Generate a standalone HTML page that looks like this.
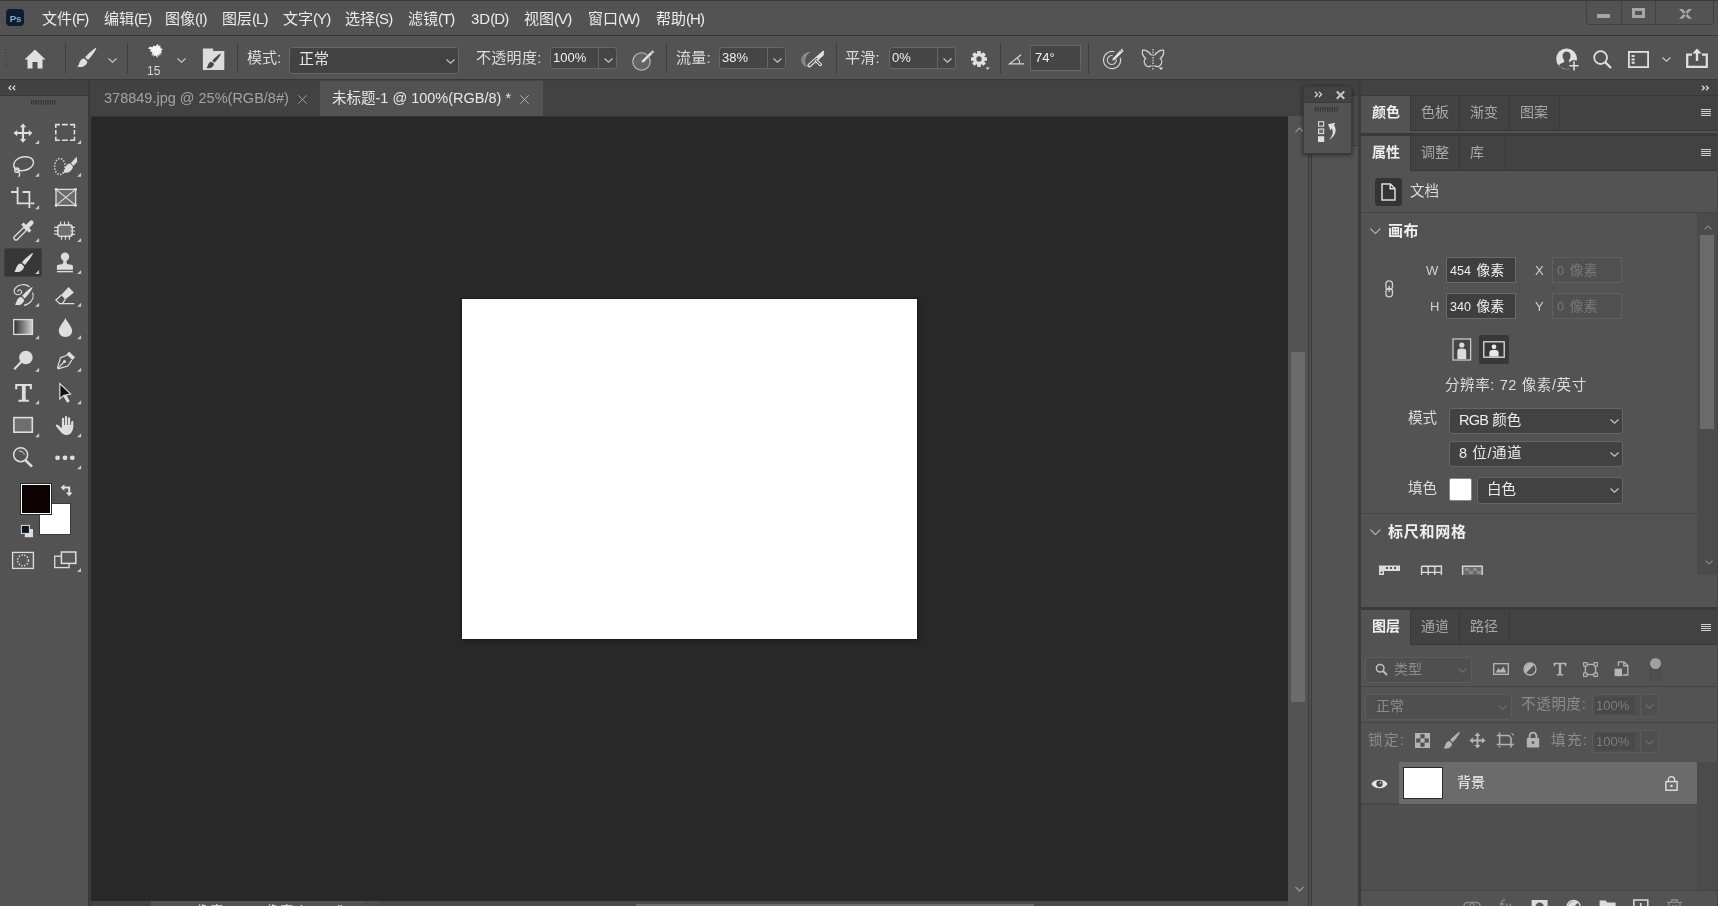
<!DOCTYPE html>
<html lang="zh-CN">
<head>
<meta charset="utf-8">
<title>Photoshop</title>
<style>
*{box-sizing:border-box;margin:0;padding:0}
html,body{width:1718px;height:906px;overflow:hidden;background:#535353}
body{position:relative;font-family:"Liberation Sans","Noto Sans CJK SC",sans-serif;color:#dcdcdc;font-size:14px;-webkit-font-smoothing:antialiased}
.abs{position:absolute}
.t{position:absolute;white-space:nowrap;line-height:1}
svg{position:absolute;overflow:visible}
/* ---- menubar ---- */
#menubar{left:0;top:0;width:1718px;height:36px;background:#535353;border-top:1px solid #3c3c3c;border-bottom:1px solid #3a3a3a}
#menubar .t{top:10px;font-size:15px;color:#ececec}
#menubar .t i{font-style:normal;letter-spacing:-0.9px}
/* ---- options bar ---- */
#optbar{left:0;top:36px;width:1718px;height:44px;background:#535353;border-bottom:1px solid #383838}
i.d{font-style:normal;font-size:12.5px;margin-right:5.5px}
.vsep{position:absolute;width:1px;background:#3f3f3f;top:7px;height:31px}
.field{position:absolute;background:#454545;border:1px solid #666;border-radius:3px}
/* ---- toolbar ---- */
#toolhead{left:0;top:80px;width:88px;height:15px;background:#424242}
#toolbar{left:0;top:95px;width:88px;height:811px;background:#535353}
/* ---- doc area ---- */
#tabbar{left:91px;top:80px;width:1197px;height:36px;background:#424242}
#canvasbg{left:91px;top:117px;width:1197px;height:784px;background:#282828}
</style>
</head>
<body>
<div id="root" style="position:absolute;left:0;top:0;width:1718px;height:906px;will-change:transform;overflow:hidden">
<!-- MENUBAR -->
<div id="menubar" class="abs">
  <span class="t" style="left:42px">文件<i>(F)</i></span>
  <span class="t" style="left:104px">编辑<i>(E)</i></span>
  <span class="t" style="left:165px">图像<i>(I)</i></span>
  <span class="t" style="left:222px">图层<i>(L)</i></span>
  <span class="t" style="left:283px">文字<i>(Y)</i></span>
  <span class="t" style="left:345px">选择<i>(S)</i></span>
  <span class="t" style="left:408px">滤镜<i>(T)</i></span>
  <span class="t" style="left:471px">3D<i>(D)</i></span>
  <span class="t" style="left:524px">视图<i>(V)</i></span>
  <span class="t" style="left:588px">窗口<i>(W)</i></span>
  <span class="t" style="left:656px">帮助<i>(H)</i></span>
  <div class="abs" style="left:6px;top:8px;width:18px;height:17px;background:#0b1e33;border-radius:4px"></div>
  <span class="t" style="left:9.8px;top:12.6px;font-size:9.6px;font-weight:bold;color:#8ca8c8;letter-spacing:-0.3px">Ps</span>
  <div class="abs" style="left:1586px;top:-1px;width:128px;height:25px;border:1px solid #414141;border-top:none;border-radius:0 0 4px 4px"></div>
  <div class="abs" style="left:1621px;top:0;width:1px;height:23px;background:#414141"></div>
  <div class="abs" style="left:1655px;top:0;width:1px;height:23px;background:#414141"></div>
  <div class="abs" style="left:1597px;top:13px;width:13px;height:4px;background:#a6a6a6"></div>
  <div class="abs" style="left:1632px;top:7px;width:13px;height:10px;border:3px solid #a6a6a6;border-width:3px 3px 3px 3px"></div>
  <svg style="left:1679px;top:8px" width="13" height="10" viewBox="0 0 13 10"><path d="M0 0 H3.7 L13 9.8 H9.3 Z M13 0 H9.3 L0 9.8 H3.7 Z" fill="#a6a6a6"/></svg>
</div>
<!-- OPTIONS BAR -->
<div id="optbar" class="abs">
  <div class="abs" style="left:5px;top:10px;width:2px;height:24px;background:repeating-linear-gradient(180deg,#444 0 1px,transparent 1px 3px)"></div>
  <svg style="left:24px;top:13px" width="22" height="20" viewBox="0 0 22 20"><path d="M11 0.5 L0.5 10.5 H3.5 V19.5 H8.5 V13 H13.5 V19.5 H18.5 V10.5 H21.5 Z" fill="#e0e0e0"/></svg>
  <div class="vsep" style="left:65px"></div>
  <svg style="left:77px;top:11px" width="20" height="21" viewBox="0 0 20 21"><g transform="translate(0.4 0.7) scale(1.02)" fill="#e0e0e0"><path d="M18.5 0 C17.1 0.2 10.7 5.6 7.6 9.2 L10.4 12 C13.7 8.4 19.1 1.6 18.5 0 Z"/><path d="M6.9 10.5 C4.3 10.4 2.7 12.6 2 14.6 C1.5 16.4 0.9 17.8 0 18.7 C2.7 19.2 5.3 19.2 7.1 17.8 C8.9 16.4 9.9 14.8 9.6 13.2 Z"/></g></svg>
  <svg style="left:108px;top:22px" width="9" height="5" viewBox="0 0 9 5"><path d="M0.5 0.5 L4.5 4.2 L8.5 0.5" fill="none" stroke="#c8c8c8" stroke-width="1.1"/></svg>
  <div class="vsep" style="left:127px"></div>
  <svg style="left:147px;top:7px" width="17" height="16" viewBox="0 0 17 16"><path d="M1 5.4 L3.4 3.6 L5.2 4.6 L6.6 2.6 L8.8 3.2 L10.4 0.8 L11.6 3.2 L13.6 3 L13.4 5 L15.8 6.2 L14 8 L14.8 10 L12.6 10.4 L12.4 13 L10.6 11.8 L10.8 15 L8.6 12.4 L6.6 13.6 L6.8 11 L4.4 11.6 L5.6 9 L2.8 8.4 L4 6.6 Z" fill="#f6f6f6"/><path d="M2 4 L5 7 M12.6 1.8 L10 6 M14.6 11.8 L11 9 M4.8 13.2 L8 9" stroke="#f0f0f0" stroke-width="0.7"/></svg>
  <span class="t" style="left:147px;top:29px;font-size:12px;color:#d8d8d8">15</span>
  <svg style="left:177px;top:22px" width="9" height="5" viewBox="0 0 9 5"><path d="M0.5 0.5 L4.5 4.2 L8.5 0.5" fill="none" stroke="#c8c8c8" stroke-width="1.1"/></svg>
  <svg style="left:202px;top:12px" width="23" height="23" viewBox="0 0 23 23"><path d="M0.9 0.6 H11.1 V3 H22.3 V22.1 H0.9 Z" fill="#dcdcdc"/><g transform="translate(4.5 5.6) scale(0.77)" fill="#464646"><path d="M18.5 0 C17.1 0.2 10.7 5.6 7.6 9.2 L10.4 12 C13.7 8.4 19.1 1.6 18.5 0 Z"/><path d="M6.9 10.5 C4.3 10.4 2.7 12.6 2 14.6 C1.5 16.4 0.9 17.8 0 18.7 C2.7 19.2 5.3 19.2 7.1 17.8 C8.9 16.4 9.9 14.8 9.6 13.2 Z"/></g></svg>
  <div class="vsep" style="left:237px"></div>
  <span class="t" style="left:247px;top:13.8px;font-size:15px">模式:</span>
  <div class="field" style="left:289px;top:11px;width:170px;height:27px;background:#424242"></div>
  <span class="t" style="left:299px;top:14.8px;font-size:15px;color:#e6e6e6">正常</span>
  <svg style="left:446px;top:23px" width="9" height="5" viewBox="0 0 9 5"><path d="M0.5 0.5 L4.5 4.2 L8.5 0.5" fill="none" stroke="#c8c8c8" stroke-width="1.1"/></svg>
  <span class="t" style="left:476px;top:13.8px;font-size:15px;letter-spacing:0.3px">不透明度:</span>
  <div class="field" style="left:550px;top:11px;width:67px;height:22px"></div><div class="abs" style="left:598px;top:12px;width:1px;height:20px;background:#666"></div>
  <span class="t" style="left:553px;top:15px;font-size:13px;color:#f0f0f0">100%</span>
  <svg style="left:604px;top:22px" width="9" height="5" viewBox="0 0 9 5"><path d="M0.5 0.5 L4.5 4.2 L8.5 0.5" fill="none" stroke="#c8c8c8" stroke-width="1.1"/></svg>
  <svg style="left:631.6px;top:13.6px" width="24" height="21" viewBox="0 0 24 21"><circle cx="9.5" cy="11.5" r="8.7" fill="#646464" stroke="#c0c0c0" stroke-width="1.1"/><path d="M8.9 13.2 L9.8 10.2 L20.4 0 L22.5 2.1 L12 12.4 Z" fill="#e2e2e2" stroke="#535353" stroke-width="0.7"/><path d="M18.7 1.7 L20.8 3.8" stroke="#535353" stroke-width="0.7"/></svg>
  <div class="vsep" style="left:666px"></div>
  <span class="t" style="left:676px;top:13.8px;font-size:15px;letter-spacing:0.3px">流量:</span>
  <div class="field" style="left:719px;top:11px;width:67px;height:22px"></div><div class="abs" style="left:767px;top:12px;width:1px;height:20px;background:#666"></div>
  <span class="t" style="left:722px;top:15px;font-size:13px;color:#f0f0f0">38%</span>
  <svg style="left:773px;top:22px" width="9" height="5" viewBox="0 0 9 5"><path d="M0.5 0.5 L4.5 4.2 L8.5 0.5" fill="none" stroke="#c8c8c8" stroke-width="1.1"/></svg>
  <svg style="left:800px;top:13px" width="26" height="19" viewBox="0 0 26 19"><defs><linearGradient id="sp" x1="0" x2="1"><stop offset="0" stop-color="#7c7c7c"/><stop offset="1" stop-color="#a4a4a4"/></linearGradient></defs><path d="M10.5 2.9 C4 3.4 0.4 8 1 11.6 C1.6 15 4 17.6 7.2 17.9 C5.2 15.6 4.6 12.6 5.4 9.4 C6.2 6.4 8 4.2 10.5 2.9 Z" fill="url(#sp)"/><path d="M9.3 16.4 L21.9 5.2" stroke="#e0e0e0" stroke-width="4" stroke-linecap="round"/><path d="M9.6 16.1 L16.8 9.7" stroke="#535353" stroke-width="1.7" stroke-linecap="round"/><path d="M16.6 11.8 L20.4 15.6" stroke="#e0e0e0" stroke-width="3.3" stroke-linecap="round"/><path d="M16.4 11.6 L20.3 15.5" stroke="#535353" stroke-width="1.1" stroke-linecap="round"/><circle cx="23.1" cy="2.9" r="1.15" fill="#e8e8e8"/></svg>
  <div class="vsep" style="left:836px"></div>
  <span class="t" style="left:845px;top:13.8px;font-size:15px;letter-spacing:0.3px">平滑:</span>
  <div class="field" style="left:889px;top:11px;width:67px;height:22px"></div><div class="abs" style="left:937px;top:12px;width:1px;height:20px;background:#666"></div>
  <span class="t" style="left:892px;top:15px;font-size:13px;color:#f0f0f0">0%</span>
  <svg style="left:943px;top:22px" width="9" height="5" viewBox="0 0 9 5"><path d="M0.5 0.5 L4.5 4.2 L8.5 0.5" fill="none" stroke="#c8c8c8" stroke-width="1.1"/></svg>
  <svg style="left:971px;top:15px" width="20" height="20" viewBox="0 0 20 20"><g transform="translate(8 8)"><g fill="#e0e0e0"><rect x="-1.8" y="-8" width="3.6" height="16" rx="0.5"/><rect x="-1.8" y="-8" width="3.6" height="16" rx="0.5" transform="rotate(45)"/><rect x="-1.8" y="-8" width="3.6" height="16" rx="0.5" transform="rotate(90)"/><rect x="-1.8" y="-8" width="3.6" height="16" rx="0.5" transform="rotate(135)"/><circle r="6"/></g><circle r="2.7" fill="#535353"/></g><path d="M14.6 16.4 H18.8 L16.7 18.8 Z" fill="#e0e0e0"/></svg>
  <div class="vsep" style="left:1000px"></div>
  <svg style="left:1008px;top:18px" width="17" height="11" viewBox="0 0 17 11"><path d="M13 0.8 L1.5 9.8 H16" fill="none" stroke="#d8d8d8" stroke-width="1.2"/><path d="M9.4 4 C11 5.4 11.8 7.4 11.8 9.8" fill="none" stroke="#d8d8d8" stroke-width="1.1"/></svg>
  <div class="field" style="left:1030px;top:9px;width:51px;height:26px;border-radius:0;background:#454545;border-color:#666"></div>
  <span class="t" style="left:1035px;top:15px;font-size:13px;color:#f0f0f0">74°</span>
  <div class="vsep" style="left:1088px"></div>
  <svg style="left:1102px;top:12px" width="23" height="21" viewBox="0 0 23 21"><path d="M18.3 9.6 A8.6 8.6 0 1 1 12.4 3.8" fill="none" stroke="#cfcfcf" stroke-width="1.15"/><path d="M14.3 11.4 A4.5 4.5 0 1 1 10.6 7.6" fill="none" stroke="#cfcfcf" stroke-width="1.1"/><path d="M9.7 13.2 L10.6 10.2 L19.9 0.2 L22 3.2 L12.7 12.2 Z" fill="#e2e2e2" stroke="#535353" stroke-width="0.7"/><path d="M18.3 1.9 L20.5 4.6" stroke="#535353" stroke-width="0.7"/></svg>
  <svg style="left:1141px;top:13px" width="24" height="22" viewBox="0 0 24 22"><path d="M10.4 6.4 C8.6 3 4.6 0.8 1.6 1.2 C0.6 3.6 1.8 7.6 4.6 9.4 C3 10.6 2.8 13.4 4.2 15.6 C5.6 17.8 8.4 18.4 10.4 16.6" fill="none" stroke="#d4d4d4" stroke-width="1.3"/><path d="M13.6 6.4 C15.4 3 19.4 0.8 22.4 1.2 C23.4 3.6 22.2 7.6 19.4 9.4 C21 10.6 21.2 13.4 19.8 15.6 C18.4 17.8 15.6 18.4 13.6 16.6" fill="none" stroke="#d4d4d4" stroke-width="1.3"/><path d="M12 0 V21.6" stroke="#dcdcdc" stroke-width="1.2" stroke-dasharray="1.5 1.2"/><path d="M17.6 18.6 H22.2 L19.9 21 Z" fill="#e0e0e0"/></svg>
  <!-- right icons -->
  <svg style="left:1556px;top:12px" width="24" height="23" viewBox="0 0 24 23"><circle cx="10.6" cy="10.8" r="10.4" fill="#e0e0e0"/><path d="M10.6 3.4 C13.4 3.4 14.8 5.6 14.6 8.2 C14.4 10.4 13.6 11.6 12.8 12.4 C12.6 13.6 13.4 14.4 15 15 C17 15.8 18 16.4 18.4 17.8 C16.4 19.8 13.6 21 10.6 21 C7.6 21 4.8 19.8 2.8 17.8 C3.2 16.4 4.2 15.8 6.2 15 C7.8 14.4 8.6 13.6 8.4 12.4 C7.6 11.6 6.8 10.4 6.6 8.2 C6.4 5.6 7.8 3.4 10.6 3.4 Z" fill="#535353"/><circle cx="18" cy="17.6" r="5.6" fill="#535353"/><path d="M18 13.2 V22.4 M13.4 17.8 H22.6" stroke="#e0e0e0" stroke-width="1.5"/></svg>
  <svg style="left:1593px;top:14px" width="19" height="19" viewBox="0 0 19 19"><circle cx="7.6" cy="7.6" r="6.4" fill="none" stroke="#e0e0e0" stroke-width="1.8"/><path d="M12.4 12.4 L18 18" stroke="#e0e0e0" stroke-width="2.2"/></svg>
  <svg style="left:1628px;top:15px" width="21" height="17" viewBox="0 0 21 17"><rect x="0.9" y="0.9" width="19.2" height="15.2" fill="none" stroke="#e0e0e0" stroke-width="1.8"/><path d="M3.6 4 H6.6 V6 H3.6 Z M3.6 7.4 H6.6 V9.4 H3.6 Z M3.6 10.8 H6.6 V12.8 H3.6 Z" fill="#e0e0e0"/></svg>
  <svg style="left:1662px;top:21px" width="9" height="5" viewBox="0 0 9 5"><path d="M0.5 0.5 L4.5 4.2 L8.5 0.5" fill="none" stroke="#c8c8c8" stroke-width="1.1"/></svg>
  <svg style="left:1686px;top:12px" width="22" height="20" viewBox="0 0 22 20"><path d="M6 6.6 H1.2 V18.8 H20.8 V6.6 H16" fill="none" stroke="#e0e0e0" stroke-width="2.2"/><path d="M11 13 V2" stroke="#e0e0e0" stroke-width="2.4"/><path d="M6.4 5.4 L11 0.4 L15.6 5.4 Z" fill="#e0e0e0"/></svg>
</div>
<!-- TOOLBAR -->
<div id="toolhead" class="abs"><svg style="left:8px;top:5px" width="8" height="6" viewBox="0 0 8 6"><path d="M3.2 0.6 L0.9 2.9 L3.2 5.2 M7.2 0.6 L4.9 2.9 L7.2 5.2" fill="none" stroke="#e6e6e6" stroke-width="1.2"/></svg></div>
<div id="toolbar" class="abs"></div><div class="abs" style="left:0;top:95px;width:88px;height:1px;background:#3b3b3b"></div>
<svg style="left:31.1px;top:100.1px" width="25.6" height="4.6" fill="#343434"><rect x="0.00" y="0" width="1.15" height="4.6"/><rect x="2.33" y="0" width="1.15" height="4.6"/><rect x="4.66" y="0" width="1.15" height="4.6"/><rect x="6.99" y="0" width="1.15" height="4.6"/><rect x="9.32" y="0" width="1.15" height="4.6"/><rect x="11.65" y="0" width="1.15" height="4.6"/><rect x="13.98" y="0" width="1.15" height="4.6"/><rect x="16.31" y="0" width="1.15" height="4.6"/><rect x="18.64" y="0" width="1.15" height="4.6"/><rect x="20.97" y="0" width="1.15" height="4.6"/><rect x="23.30" y="0" width="1.15" height="4.6"/></svg>
<div class="abs" style="left:4px;top:248px;width:38px;height:29px;background:#373737;border-radius:2px;border:1px solid #414141"></div>
<svg style="left:0;top:95px" width="88" height="500" viewBox="0 95 88 500" fill="none" stroke="none"><path d="M39.1 140 V144 H35.1 Z" fill="#cacaca"/><path d="M81.1 140 V144 H77.1 Z" fill="#cacaca"/><path d="M39.1 172.8 V176.8 H35.1 Z" fill="#cacaca"/><path d="M81.1 172.8 V176.8 H77.1 Z" fill="#cacaca"/><path d="M39.1 205.2 V209.2 H35.1 Z" fill="#cacaca"/><path d="M39.1 238 V242 H35.1 Z" fill="#cacaca"/><path d="M81.1 238 V242 H77.1 Z" fill="#cacaca"/><path d="M39.1 270 V274 H35.1 Z" fill="#cacaca"/><path d="M81.1 270 V274 H77.1 Z" fill="#cacaca"/><path d="M39.1 302.8 V306.8 H35.1 Z" fill="#cacaca"/><path d="M81.1 302.8 V306.8 H77.1 Z" fill="#cacaca"/><path d="M39.1 335.2 V339.2 H35.1 Z" fill="#cacaca"/><path d="M81.1 335.2 V339.2 H77.1 Z" fill="#cacaca"/><path d="M39.1 367.8 V371.8 H35.1 Z" fill="#cacaca"/><path d="M81.1 367.8 V371.8 H77.1 Z" fill="#cacaca"/><path d="M39.1 400.2 V404.2 H35.1 Z" fill="#cacaca"/><path d="M81.1 400.2 V404.2 H77.1 Z" fill="#cacaca"/><path d="M39.1 433.2 V437.2 H35.1 Z" fill="#cacaca"/><path d="M81.1 433.2 V437.2 H77.1 Z" fill="#cacaca"/><path d="M81.1 465.2 V469.2 H77.1 Z" fill="#cacaca"/><path d="M81 568 V572 H77 Z" fill="#c8c8c8"/><path d="M23 123.6 L26.2 127.3 H24.1 V132.1 H28.8 V130 L32.5 133.1 L28.8 136.2 V134.1 H24.1 V139 H26.2 L23 142.7 L19.8 139 H21.9 V134.1 H17.2 V136.2 L13.5 133.1 L17.2 130 V132.1 H21.9 V127.3 H19.8 Z" fill="#dedede"/><path d="M55.8 128 V124.6 H59.9 M62 124.6 H67.8 M69.9 124.6 H74.4 V128 M55.8 130.1 V134.4 M74.4 130.1 V134.4 M55.8 136.7 V140.2 H59.9 M62 140.2 H67.8 M69.9 140.2 H74.4 V136.7" stroke="#dedede" stroke-width="1.6"/><g stroke="#dedede" stroke-width="1.45"><ellipse cx="23.6" cy="163.7" rx="10.1" ry="6.8" transform="rotate(-13 23.6 163.7)"/><circle cx="16.9" cy="170.2" r="2.1"/><path d="M18.4 171.8 C19.8 173 20.4 175.2 18.4 176.8"/></g><ellipse cx="59.9" cy="166.6" rx="5.3" ry="8" stroke="#dedede" stroke-width="1.5" stroke-dasharray="1.4 1.55"/><path d="M76.8 156.8 L77.1 162 L73.3 166 L71 162.8 Z" fill="#dedede"/><path d="M70.4 163.6 C68 163.4 66.2 165.6 65.4 167.6 C64.8 169.6 64.2 171.6 63.2 172.8 C66 173 68.4 172.8 70.2 171.2 C72 169.6 73.2 167.6 72.8 166.4 Z" fill="#dedede"/><g stroke="#dedede" stroke-width="1.8"><path d="M11 192 H17 M17.6 187 V203.4 H29 M22.6 192 H29.4 V208 M30.6 203.4 H34.4"/></g><rect x="56" y="189.4" width="19.6" height="16" fill="#6a6a6a" stroke="#dedede" stroke-width="1.3"/><path d="M56 189.4 L75.6 205.4 M75.6 189.4 L56 205.4" stroke="#dedede" stroke-width="1.2"/><g fill="#dedede"><circle cx="56" cy="189.4" r="1.3"/><circle cx="75.6" cy="189.4" r="1.3"/><circle cx="56" cy="205.4" r="1.3"/><circle cx="75.6" cy="205.4" r="1.3"/></g><path d="M31.4 222.6 L26.6 227.4" stroke="#dedede" stroke-width="4.4" stroke-linecap="round"/><path d="M22.4 223.6 L30.3 231.5" stroke="#dedede" stroke-width="3.2"/><path d="M24.6 229.4 L16 238" stroke="#dedede" stroke-width="5.4" stroke-linecap="round"/><path d="M24 230 L16 238" stroke="#535353" stroke-width="2.7" stroke-linecap="round"/><rect x="57.7" y="225" width="14.6" height="11.4" rx="2.4" fill="#6e6e6e" stroke="#dedede" stroke-width="1.3"/><g stroke="#dedede" stroke-width="1.2"><path d="M60.6 221.6 V226 M64.5 221.6 V226 M68.5 221.6 V226 M61.5 235.4 V239.8 M65.5 235.4 V239.8 M69.4 235.4 V239.8 M54.1 227.4 H58.7 M54.1 230.8 H58.7 M54.1 234.2 H58.7 M70.6 227.4 H75 M70.6 231 H75 M70.6 234.4 H75"/></g><g transform="translate(14.3 253) scale(1.0)" fill="#dedede"><path d="M18.5 0 C17.1 0.2 10.7 5.6 7.6 9.2 L10.4 12 C13.7 8.4 19.1 1.6 18.5 0 Z"/><path d="M6.9 10.5 C4.3 10.4 2.7 12.6 2 14.6 C1.5 16.4 0.9 17.8 0 18.7 C2.7 19.2 5.3 19.2 7.1 17.8 C8.9 16.4 9.9 14.8 9.6 13.2 Z"/></g><circle cx="65" cy="256.8" r="4.2" fill="#dedede"/><path d="M63.3 259.6 C63.6 262 63.4 263.6 62 264.3 L58.4 264.7 C57.4 264.9 56.9 265.5 56.9 266.5 V269.7 H72.9 V266.5 C72.9 265.5 72.4 264.9 71.4 264.7 L67.8 264.3 C66.4 263.6 66.2 262 66.7 259.6 Z" fill="#dedede"/><rect x="56.9" y="270.9" width="16" height="1.4" fill="#dedede"/><g transform="translate(14.9 287) scale(0.95)" fill="#dedede"><path d="M18.5 0 C17.1 0.2 10.7 5.6 7.6 9.2 L10.4 12 C13.7 8.4 19.1 1.6 18.5 0 Z"/><path d="M6.9 10.5 C4.3 10.4 2.7 12.6 2 14.6 C1.5 16.4 0.9 17.8 0 18.7 C2.7 19.2 5.3 19.2 7.1 17.8 C8.9 16.4 9.9 14.8 9.6 13.2 Z"/></g><path d="M29.6 287 C27.6 285 24.6 284.4 21.6 284.8 C17.4 285.4 14.2 288 14.2 291 C14.2 293.6 16.2 295 18.2 294.8 C20.4 294.6 21.8 293.2 21.6 291.6 C21.4 290.2 20 289.6 18.8 290 C17.8 290.4 17.6 291.4 18.2 291.8 M32.4 292.6 C33.8 295 33.4 298 31.4 300.8 C29.6 303.2 27 304.8 24 305.4" stroke="#dedede" stroke-width="1.1"/><path d="M68.5 287 L73.9 292.4 L65.2 299.6 L61.2 295 Z" fill="#dedede"/><path d="M61.4 295 L55.9 300.1 L59.6 303.7 H74.3 M65.4 299.4 L62.4 303.4" stroke="#dedede" stroke-width="1.3"/><defs><linearGradient id="gr" x1="0" x2="1" y1="0" y2="0"><stop offset="0" stop-color="#2e2e2e"/><stop offset="1" stop-color="#d0d0d0"/></linearGradient></defs><rect x="13.7" y="319.6" width="18.8" height="14.8" fill="url(#gr)" stroke="#dedede" stroke-width="1.3"/><path d="M65.4 317.8 C66.4 321.6 72.2 326.4 72.2 330.8 C72.2 334.4 69.2 337 65.4 337 C61.6 337 58.8 334.4 58.8 330.8 C58.8 326.4 64.4 321.6 65.4 317.8 Z" fill="#dedede"/><circle cx="25.9" cy="357.4" r="6.75" fill="#dedede"/><path d="M21.6 361.6 L14.2 369.2" stroke="#dedede" stroke-width="2.1"/><path d="M69 351.6 L75 357.2 L72.5 360 L66.4 354.6 Z" fill="#dedede"/><path d="M67 355.2 L60.5 357.6 L57.6 367.4 C57.4 368.2 58 368.8 58.8 368.6 L67.8 366 L71.8 360.2" stroke="#dedede" stroke-width="1.2"/><path d="M57.8 368.4 L64 362" stroke="#dedede" stroke-width="1.1"/><circle cx="64.5" cy="361.6" r="1.5" fill="#dedede"/><path d="M15.2 384 H31.9 V389.2 H29.8 V386 H25.7 V399.8 H28.9 V401.7 H18.4 V399.8 H21.9 V386 H17.3 V389.2 H15.2 Z" fill="#dedede"/><path d="M63.4 396.4 L66.2 394.8 L69.8 401.2 L67.2 402.8 Z" fill="#dedede"/><path d="M59.8 383.6 V398.9 L63.5 395.6 L70.6 393.9 Z" fill="#0c1018" stroke="#dedede" stroke-width="1.2" stroke-linejoin="miter"/><rect x="13.9" y="417.6" width="18.4" height="14.6" fill="#6e6e6e" stroke="#dedede" stroke-width="1.6"/><g stroke="#dedede" stroke-width="2.2" stroke-linecap="round"><path d="M63 418.8 V428 M66.05 417.2 V428 M69.05 418.3 V428 M72.4 422 L71.7 428"/></g><path d="M61.9 425 H73.4 C73.4 430 71.2 435.1 66.8 435.1 C63.4 435.1 61.4 433 59.6 430.6 L56 426.2 C55.3 425.2 56.6 424 57.8 424.9 L61.9 428.2 Z" fill="#dedede"/><circle cx="20.65" cy="454.7" r="7" stroke="#dedede" stroke-width="1.5"/><path d="M18.9 451.1 C21.4 450.8 23.8 452.4 24.4 454.6" stroke="#dedede" stroke-width="1"/><path d="M25.6 460.4 L32 466.6" stroke="#dedede" stroke-width="2.7"/><g fill="#dedede"><circle cx="57.55" cy="457.8" r="2.4"/><circle cx="65" cy="457.8" r="2.4"/><circle cx="72.3" cy="457.8" r="2.4"/></g><path d="M60.6 487.6 L64.4 484.2 V486.6 H70.2 V492.4 H72.6 L69.2 496.2 L65.8 492.4 H68.2 V488.6 H64.4 V491 Z" fill="#dedede"/><rect x="24.8" y="529" width="8.2" height="8.2" fill="#dedede"/><rect x="21.4" y="525.4" width="8" height="8" fill="#0c1622" stroke="#dedede" stroke-width="1"/><rect x="12.6" y="552.4" width="20.8" height="16" stroke="#dedede" stroke-width="1.3" fill="#595959"/><circle cx="23" cy="560.4" r="5.4" stroke="#dedede" stroke-width="1.5" stroke-dasharray="1.3 1.6"/><rect x="54.7" y="556.2" width="14.4" height="11.4" stroke="#dedede" stroke-width="1.3"/><rect x="61.4" y="552" width="14.4" height="11.4" fill="#595959" stroke="#dedede" stroke-width="1.5"/></svg>
<div class="abs" style="left:39px;top:503px;width:32px;height:32px;background:#fff;border:1px solid #3a3a3a"></div>
<div class="abs" style="left:20px;top:483px;width:32px;height:32px;background:#0d0202;border:1px solid #2a2a2a;box-shadow:inset 0 0 0 1px #fff"></div>
<div class="abs" style="left:88px;top:80px;width:2px;height:826px;background:#393939"></div><div class="abs" style="left:90px;top:80px;width:1px;height:826px;background:#404040"></div>
<!-- DOC AREA -->
<div id="tabbar" class="abs" style="width:1217px"></div>
<div class="abs" style="left:320px;top:80px;width:223px;height:36px;background:#535353"></div>
<span class="t" style="left:104px;top:91px;font-size:14.5px;color:#a3a3a3">378849.jpg @ 25%(RGB/8#)</span>
<svg style="left:298px;top:95px" width="9" height="9" viewBox="0 0 9 9"><path d="M0.3 0.3 L8.7 8.7 M8.7 0.3 L0.3 8.7" stroke="#a3a3a3" stroke-width="0.95"/></svg>
<span class="t" style="left:332px;top:91px;font-size:14.5px;color:#e8e8e8">未标题-1 @ 100%(RGB/8) *</span>
<svg style="left:520px;top:95px" width="9" height="9" viewBox="0 0 9 9"><path d="M0.3 0.3 L8.7 8.7 M8.7 0.3 L0.3 8.7" stroke="#b4b4b4" stroke-width="0.95"/></svg>
<div class="abs" style="left:91px;top:116px;width:1197px;height:1px;background:#333"></div>
<div id="canvasbg" class="abs"></div>
<div class="abs" style="left:462px;top:299px;width:455px;height:340px;background:#fff;box-shadow:0 0 0 1px #1b1b1b,1px 2px 5px rgba(0,0,0,.35)"></div>
<!-- v scrollbar -->
<div class="abs" style="left:1288px;top:117px;width:20px;height:789px;background:#535353"></div>
<div class="abs" style="left:1291px;top:352px;width:14px;height:350px;background:#6b6b6b"></div>
<svg style="left:1295px;top:127px" width="9" height="6" viewBox="0 0 9 6"><path d="M0.5 5 L4.5 1 L8.5 5" fill="none" stroke="#9a9a9a" stroke-width="1.1"/></svg>
<svg style="left:1295px;top:886px" width="9" height="6" viewBox="0 0 9 6"><path d="M0.5 1 L4.5 5 L8.5 1" fill="none" stroke="#9a9a9a" stroke-width="1.1"/></svg>
<!-- status bar -->
<div class="abs" style="left:91px;top:901px;width:1197px;height:5px;background:#494949"></div><div class="abs" style="left:91px;top:901px;width:60px;height:5px;background:#424242"></div>
<div class="abs" style="left:363px;top:901px;width:16px;height:5px;background:#4e4e4e"></div><div class="abs" style="left:151px;top:901px;width:212px;height:5px;background:#535353;overflow:hidden"><span class="t" style="left:17.5px;top:3px;font-size:14px;color:#e0e0e0">454 像素 x 340 像素 (72 ppi)</span></div>
<div class="abs" style="left:636px;top:904px;width:398px;height:2px;background:#6b6b6b"></div>
<!-- dock column -->
<div class="abs" style="left:1308px;top:80px;width:4px;height:826px;background:#3c3c3c"></div>
<div class="abs" style="left:1309px;top:96px;width:2px;height:810px;background:#4f4f4f"></div>
<div class="abs" style="left:1311px;top:80px;width:47px;height:15px;background:#424242"></div><div class="abs" style="left:1308px;top:80px;width:4px;height:15px;background:#404040"></div>
<div class="abs" style="left:1312px;top:95px;width:46px;height:811px;background:#535353"></div>
<div class="abs" style="left:1358px;top:80px;width:3px;height:826px;background:#3c3c3c"></div>
<div class="abs" style="left:1311px;top:95px;width:47px;height:1px;background:#3c3c3c"></div>
<div class="abs" style="left:1352px;top:96px;width:6px;height:50px;background:#4b4b4b;border-bottom:1px solid #3e3e3e"></div>
<div class="abs" style="left:0;top:80px;width:1718px;height:1px;background:#3c3c3c;opacity:.6"></div>
<!-- floating mini panel -->
<div class="abs" style="left:1303px;top:86px;width:49px;height:68px;background:#535353;border-radius:4px 4px 0 0;box-shadow:0 1px 4px rgba(0,0,0,.5);border:1px solid #3c3c3c"></div>
<div class="abs" style="left:1304px;top:87px;width:47px;height:15px;background:#424242;border-radius:3px 3px 0 0"></div>
<div class="abs" style="left:1304px;top:102px;width:47px;height:1px;background:#3a3a3a"></div>
<svg style="left:1314px;top:91px" width="9" height="7" viewBox="0 0 9 7"><path d="M1 0.8 L3.6 3.4 L1 6 M5 0.8 L7.6 3.4 L5 6" fill="none" stroke="#e0e0e0" stroke-width="1.2"/></svg>
<svg style="left:1336px;top:91px" width="9" height="8" viewBox="0 0 9 8"><path d="M0.8 0.4 L8.2 7.8 M8.2 0.4 L0.8 7.8" stroke="#c4c4c4" stroke-width="2.1"/></svg>
<svg style="left:1315.1px;top:107.3px" width="24.0" height="4.6" fill="#343434"><rect x="0.00" y="0" width="1.15" height="4.6"/><rect x="2.40" y="0" width="1.15" height="4.6"/><rect x="4.80" y="0" width="1.15" height="4.6"/><rect x="7.20" y="0" width="1.15" height="4.6"/><rect x="9.60" y="0" width="1.15" height="4.6"/><rect x="12.00" y="0" width="1.15" height="4.6"/><rect x="14.40" y="0" width="1.15" height="4.6"/><rect x="16.80" y="0" width="1.15" height="4.6"/><rect x="19.20" y="0" width="1.15" height="4.6"/><rect x="21.60" y="0" width="1.15" height="4.6"/></svg>
<svg style="left:1317px;top:120px" width="22" height="23" viewBox="0 0 22 23"><rect x="1.6" y="1.7" width="5" height="4.4" fill="#4c4c4c" stroke="#e0e0e0" stroke-width="1.1"/><rect x="1.6" y="9" width="5" height="4.6" fill="#6a6a6a" stroke="#e0e0e0" stroke-width="1.1"/><rect x="1" y="16.2" width="6.2" height="5.8" fill="#e0e0e0"/><path d="M11 4.2 L18.2 2.8 L17 5.6 C20.2 9.6 19 16.4 11.6 20 C16.4 15.6 16.6 11 14.6 8.2 L13.6 10.4 Z" fill="#e0e0e0"/></svg>
<!-- PANELS -->
<div class="abs" style="left:1361px;top:80px;width:357px;height:15px;background:#424242"></div>
<svg style="left:1701px;top:85px" width="9" height="7" viewBox="0 0 9 7"><path d="M1 0.8 L3.4 3 L1 5.2 M5 0.8 L7.4 3 L5 5.2" fill="none" stroke="#e0e0e0" stroke-width="1.2"/></svg>
<div class="abs" style="left:1361px;top:95px;width:357px;height:1px;background:#383838"></div>
<div class="abs" style="left:1361px;top:96px;width:357px;height:35px;background:#424242;border-bottom:1px solid #383838"></div>
<div class="abs" style="left:1361px;top:131px;width:357px;height:2px;background:#535353"></div>
<div class="abs" style="left:1361px;top:96px;width:49px;height:37px;background:#535353"></div>
<span class="t" style="left:1372px;top:105px;font-size:14px;font-weight:bold;color:#f0f0f0">颜色</span>
<div class="abs" style="left:1410px;top:96px;width:1px;height:35px;background:#383838"></div>
<span class="t" style="left:1421px;top:105px;font-size:14px;color:#a8a8a8">色板</span>
<div class="abs" style="left:1459px;top:96px;width:1px;height:35px;background:#383838"></div>
<span class="t" style="left:1470px;top:105px;font-size:14px;color:#a8a8a8">渐变</span>
<div class="abs" style="left:1509px;top:96px;width:1px;height:35px;background:#383838"></div>
<span class="t" style="left:1520px;top:105px;font-size:14px;color:#a8a8a8">图案</span>
<div class="abs" style="left:1559px;top:96px;width:1px;height:35px;background:#383838"></div>
<div class="abs" style="left:1701px;top:109px;width:10px;height:7px;background:repeating-linear-gradient(180deg,#d0d0d0 0 1px,transparent 1px 2px)"></div>
<div class="abs" style="left:1361px;top:133px;width:357px;height:3px;background:#3a3a3a"></div>
<div class="abs" style="left:1361px;top:136px;width:357px;height:35px;background:#424242;border-bottom:1px solid #383838"></div>
<div class="abs" style="left:1361px;top:171px;width:357px;height:436px;background:#535353"></div>
<div class="abs" style="left:1361px;top:136px;width:49px;height:37px;background:#535353"></div>
<span class="t" style="left:1372px;top:145px;font-size:14px;font-weight:bold;color:#f0f0f0">属性</span>
<div class="abs" style="left:1410px;top:136px;width:1px;height:35px;background:#383838"></div>
<span class="t" style="left:1421px;top:145px;font-size:14px;color:#a8a8a8">调整</span>
<div class="abs" style="left:1459px;top:136px;width:1px;height:35px;background:#383838"></div>
<span class="t" style="left:1470px;top:145px;font-size:14px;color:#a8a8a8">库</span>
<div class="abs" style="left:1505px;top:136px;width:1px;height:35px;background:#383838"></div>
<div class="abs" style="left:1701px;top:149px;width:10px;height:7px;background:repeating-linear-gradient(180deg,#d0d0d0 0 1px,transparent 1px 2px)"></div>
<div class="abs" style="left:1375px;top:178px;width:27px;height:28px;background:#343434;border-radius:3px"></div>
<svg style="left:1381px;top:183px" width="15" height="18" viewBox="0 0 15 18"><path d="M1 1 H9.4 L14 5.6 V17 H1 Z M9.2 1 V5.8 H14" fill="none" stroke="#dcdcdc" stroke-width="1.5"/></svg>
<span class="t" style="left:1410px;top:184px;font-size:14.5px">文档</span>
<div class="abs" style="left:1361px;top:212px;width:357px;height:1px;background:#444"></div>
<div class="abs" style="left:1697px;top:213px;width:21px;height:362px;background:#4b4b4b"></div>
<div class="abs" style="left:1700px;top:235px;width:14px;height:194px;background:#6b6b6b"></div>
<svg style="left:1704px;top:224.5px" width="8" height="5" viewBox="0 0 8 5"><path d="M0.5 4.4 L4 0.9 L7.5 4.4" fill="none" stroke="#8e8e8e" stroke-width="1.05"/></svg>
<svg style="left:1704.5px;top:560px" width="8" height="5" viewBox="0 0 8 5"><path d="M0.5 0.6 L4 4.1 L7.5 0.6" fill="none" stroke="#8e8e8e" stroke-width="1.05"/></svg>
<svg style="left:1369.5px;top:227.5px" width="11" height="6.5" viewBox="0 0 11 6.5"><path d="M0.5 0.6 L5.4 5.6 L10.3 0.6" fill="none" stroke="#c4c4c4" stroke-width="1.05"/></svg>
<span class="t" style="left:1388px;top:222.5px;font-size:15px;font-weight:bold;color:#f0f0f0;letter-spacing:0.4px">画布</span>
<svg style="left:1384px;top:280px" width="10.4" height="17.8" viewBox="0 0 11 20"><rect x="1.8" y="1" width="7.4" height="9.6" rx="3.7" fill="none" stroke="#d0d0d0" stroke-width="1.5"/><rect x="1.8" y="9.4" width="7.4" height="9.6" rx="3.7" fill="none" stroke="#d0d0d0" stroke-width="1.5"/><path d="M5.5 6.6 V13.4" stroke="#d0d0d0" stroke-width="1.5"/></svg>
<span class="t" style="left:1426px;top:264px;font-size:13px;color:#d0d0d0">W</span>
<div class="field" style="left:1446px;top:257px;width:70px;height:26px;background:#3f3f3f;border-color:#696969;border-radius:0"></div><span class="t" style="left:1450px;top:263px;font-size:14px;color:#f0f0f0"><i class="d">454</i>像素</span>
<span class="t" style="left:1535px;top:264px;font-size:13px;color:#d0d0d0">X</span>
<div class="field" style="left:1552px;top:257px;width:70px;height:26px;background:#505050;border-color:#5f5f5f;border-radius:0"></div><span class="t" style="left:1557px;top:263px;font-size:14px;color:#787878"><i class="d">0</i>像素</span>
<span class="t" style="left:1430px;top:300px;font-size:13px;color:#d0d0d0">H</span>
<div class="field" style="left:1446px;top:293px;width:70px;height:26px;background:#3f3f3f;border-color:#696969;border-radius:0"></div><span class="t" style="left:1450px;top:299px;font-size:14px;color:#f0f0f0"><i class="d">340</i>像素</span>
<span class="t" style="left:1535px;top:300px;font-size:13px;color:#d0d0d0">Y</span>
<div class="field" style="left:1552px;top:293px;width:70px;height:26px;background:#505050;border-color:#5f5f5f;border-radius:0"></div><span class="t" style="left:1557px;top:299px;font-size:14px;color:#787878"><i class="d">0</i>像素</span>
<svg style="left:1452px;top:338px" width="20" height="23" viewBox="0 0 20 23"><rect x="1" y="1" width="17.6" height="21" fill="#464646" stroke="#c8c8c8" stroke-width="1.3"/><circle cx="9.8" cy="7" r="2.6" fill="#dcdcdc"/><path d="M5.4 21 V13 C5.4 11 7 10.4 9.8 10.4 C12.6 10.4 14.2 11 14.2 13 V21 Z" fill="#dcdcdc"/></svg>
<div class="abs" style="left:1479px;top:334.5px;width:29.5px;height:29.5px;background:#383838;border-radius:2px"></div>
<svg style="left:1483px;top:341px" width="22" height="17" viewBox="0 0 22 17"><rect x="0.8" y="0.8" width="20.4" height="15.4" fill="#383838" stroke="#e0e0e0" stroke-width="1.3"/><circle cx="11" cy="5.8" r="2.4" fill="#e8e8e8"/><path d="M6.4 15.6 V11.6 C6.4 9.6 8 9 11 9 C14 9 15.6 9.6 15.6 11.6 V15.6 Z" fill="#e8e8e8"/></svg>
<span class="t" style="left:1445px;top:378px;font-size:14.5px;letter-spacing:0.62px">分辨率: 72 像素/英寸</span>
<span class="t" style="left:1408px;top:411px;font-size:14.5px">模式</span>
<div class="field" style="left:1449px;top:408px;width:174px;height:26px;background:#424242;border-color:#666"></div><span class="t" style="left:1459px;top:413px;font-size:14.5px;color:#ececec"><i style="font-style:normal;letter-spacing:-0.7px">RGB</i> 颜色</span><svg style="left:1610px;top:419px" width="9" height="5" viewBox="0 0 9 5"><path d="M0.5 0.5 L4.5 4.2 L8.5 0.5" fill="none" stroke="#c8c8c8" stroke-width="1.1"/></svg>
<div class="field" style="left:1449px;top:441px;width:174px;height:26px;background:#424242;border-color:#666"></div><span class="t" style="left:1459px;top:446px;font-size:14.5px;color:#ececec;letter-spacing:0.6px">8 位/通道</span><svg style="left:1610px;top:452px" width="9" height="5" viewBox="0 0 9 5"><path d="M0.5 0.5 L4.5 4.2 L8.5 0.5" fill="none" stroke="#c8c8c8" stroke-width="1.1"/></svg>
<span class="t" style="left:1408px;top:481px;font-size:14.5px">填色</span>
<div class="abs" style="left:1449px;top:478px;width:23px;height:23px;background:#fff;border:1px solid #8a8a8a;border-radius:2px"></div>
<div class="field" style="left:1477px;top:477px;width:146px;height:27px;background:#424242;border-color:#666"></div><span class="t" style="left:1487px;top:482px;font-size:14.5px;color:#ececec">白色</span><svg style="left:1610px;top:488px" width="9" height="5" viewBox="0 0 9 5"><path d="M0.5 0.5 L4.5 4.2 L8.5 0.5" fill="none" stroke="#c8c8c8" stroke-width="1.1"/></svg>
<div class="abs" style="left:1361px;top:513px;width:336px;height:1px;background:#444"></div>
<svg style="left:1369.5px;top:528.5px" width="11" height="6.5" viewBox="0 0 11 6.5"><path d="M0.5 0.6 L5.4 5.6 L10.3 0.6" fill="none" stroke="#c4c4c4" stroke-width="1.05"/></svg>
<span class="t" style="left:1388px;top:524px;font-size:15px;font-weight:bold;color:#f0f0f0;letter-spacing:0.75px">标尺和网格</span>
<div class="abs" style="left:1361px;top:560px;width:336px;height:15px;overflow:hidden"><svg style="left:18px;top:5px" width="125" height="22" viewBox="0 0 125 22"><path d="M0 0.5 H21 V6 H5 V10 H0 Z" fill="#dcdcdc"/><g fill="#535353"><rect x="7" y="2" width="2" height="2"/><rect x="11" y="2" width="2" height="2"/><rect x="15" y="2" width="2" height="2"/><rect x="1.5" y="6.5" width="2" height="2"/></g><path d="M42.6 1.2 H62.4 V12 M42.6 1.2 V12 M49.2 1.2 V12 M55.8 1.2 V12 M42.6 7.4 H62.4" fill="none" stroke="#dcdcdc" stroke-width="1.4"/><rect x="83.6" y="1.2" width="19.6" height="12" fill="#6a6a6a" stroke="#dcdcdc" stroke-width="1.4"/><g fill="#8a8a8a"><rect x="86" y="3" width="4" height="3"/><rect x="94" y="3" width="4" height="3"/><rect x="90" y="6" width="4" height="3"/><rect x="98" y="6" width="4" height="3"/></g></svg></div>
<div class="abs" style="left:1361px;top:607px;width:357px;height:3px;background:#3a3a3a"></div>
<div class="abs" style="left:1361px;top:610px;width:357px;height:35px;background:#424242;border-bottom:1px solid #383838"></div>
<div class="abs" style="left:1361px;top:645px;width:357px;height:261px;background:#535353"></div>
<div class="abs" style="left:1361px;top:610px;width:49px;height:37px;background:#535353"></div>
<span class="t" style="left:1372px;top:619px;font-size:14px;font-weight:bold;color:#f0f0f0">图层</span>
<div class="abs" style="left:1410px;top:610px;width:1px;height:35px;background:#383838"></div>
<span class="t" style="left:1421px;top:619px;font-size:14px;color:#a8a8a8">通道</span>
<div class="abs" style="left:1459px;top:610px;width:1px;height:35px;background:#383838"></div>
<span class="t" style="left:1470px;top:619px;font-size:14px;color:#a8a8a8">路径</span>
<div class="abs" style="left:1509px;top:610px;width:1px;height:35px;background:#383838"></div>
<div class="abs" style="left:1701px;top:624px;width:10px;height:7px;background:repeating-linear-gradient(180deg,#d0d0d0 0 1px,transparent 1px 2px)"></div>
<div class="field" style="left:1365px;top:657px;width:107px;height:26px;background:#4f4f4f;border-color:#5c5c5c"></div>
<svg style="left:1375px;top:663px" width="13" height="13" viewBox="0 0 13 13"><circle cx="5.2" cy="5.2" r="3.8" fill="none" stroke="#c0c0c0" stroke-width="1.5"/><path d="M8 8 L12 12" stroke="#c0c0c0" stroke-width="1.8"/></svg>
<span class="t" style="left:1394px;top:662px;font-size:14px;color:#8c8c8c">类型</span>
<svg style="left:1458px;top:668px" width="9" height="5" viewBox="0 0 9 5"><path d="M0.5 0.5 L4.5 4.2 L8.5 0.5" fill="none" stroke="#6e6e6e" stroke-width="1.1"/></svg>
<svg style="left:1493px;top:663px" width="16" height="12" viewBox="0 0 16 12"><rect x="0.7" y="0.7" width="14.6" height="10.6" fill="none" stroke="#b6b6b6" stroke-width="1.3"/><path d="M2.6 9.4 L5.6 5 L7.6 7.6 L10.2 3.6 L13.4 9.4 Z" fill="#b6b6b6"/></svg>
<svg style="left:1523px;top:662px" width="14" height="14" viewBox="0 0 14 14"><circle cx="7" cy="7" r="6" fill="none" stroke="#b6b6b6" stroke-width="1.3"/><path d="M11.2 2.8 A6 6 0 0 0 2.8 11.2 Z" fill="#b6b6b6"/></svg>
<svg style="left:1553px;top:662px" width="14" height="14" viewBox="0 0 14 14"><path d="M0.6 0.8 H13.4 V4.2 H12.2 C12 2.8 11.6 2.2 10.4 2.2 H8.2 V11.4 C8.2 12 8.8 12.2 10.4 12.2 V13.4 H3.6 V12.2 C5.2 12.2 5.8 12 5.8 11.4 V2.2 H3.6 C2.4 2.2 2 2.8 1.8 4.2 H0.6 Z" fill="#b6b6b6"/></svg>
<svg style="left:1583px;top:662px" width="15" height="15" viewBox="0 0 15 15"><rect x="2.4" y="2.4" width="10.2" height="10.2" fill="none" stroke="#b6b6b6" stroke-width="1.3"/><g fill="#535353" stroke="#b6b6b6" stroke-width="1.1"><rect x="0.6" y="0.6" width="3.4" height="3.4"/><rect x="11" y="0.6" width="3.4" height="3.4"/><rect x="0.6" y="11" width="3.4" height="3.4"/><rect x="11" y="11" width="3.4" height="3.4"/></g></svg>
<svg style="left:1614px;top:661px" width="15" height="16" viewBox="0 0 15 16"><path d="M4.4 5 V0.8 H10 L13.8 4.6 V14 H8.6 M9.8 0.8 V4.8 H13.8" fill="none" stroke="#b6b6b6" stroke-width="1.3"/><rect x="0.6" y="7.6" width="7.4" height="7.6" fill="#b6b6b6"/></svg>
<div class="abs" style="left:1650px;top:661px;width:11px;height:20px;border-radius:6px;background:#505050;border:1px solid #474747"></div><div class="abs" style="left:1650px;top:658px;width:11px;height:11px;border-radius:6px;background:#a0a0a0"></div>
<div class="abs" style="left:1361px;top:686px;width:357px;height:1px;background:#454545"></div>
<div class="field" style="left:1365px;top:694px;width:147px;height:26px;background:#4f4f4f;border-color:#5c5c5c"></div>
<span class="t" style="left:1376px;top:699px;font-size:14px;color:#8c8c8c">正常</span>
<svg style="left:1498px;top:705px" width="9" height="5" viewBox="0 0 9 5"><path d="M0.5 0.5 L4.5 4.2 L8.5 0.5" fill="none" stroke="#6e6e6e" stroke-width="1.1"/></svg>
<span class="t" style="left:1521px;top:697px;font-size:14.5px;color:#8c8c8c;letter-spacing:0.7px">不透明度:</span>
<div class="field" style="left:1592px;top:694px;width:67px;height:23px;background:#4f4f4f;border-color:#5a5a5a"></div><div class="abs" style="left:1595px;top:697px;width:40px;height:17px;background:#494949"></div><div class="abs" style="left:1640px;top:695px;width:1px;height:21px;background:#5a5a5a"></div><span class="t" style="left:1596px;top:699px;font-size:13px;color:#7c7c7c">100%</span><svg style="left:1645px;top:704px" width="9" height="5" viewBox="0 0 9 5"><path d="M0.5 0.5 L4.5 4.2 L8.5 0.5" fill="none" stroke="#6e6e6e" stroke-width="1.1"/></svg>
<div class="abs" style="left:1361px;top:722px;width:357px;height:1px;background:#454545"></div>
<span class="t" style="left:1368px;top:733px;font-size:14.5px;color:#8c8c8c;letter-spacing:1.4px">锁定:</span>
<svg style="left:1415px;top:733px" width="15" height="15" viewBox="0 0 15 15"><rect x="0.6" y="0.6" width="13.8" height="13.8" fill="none" stroke="#b4b4b4" stroke-width="1.2"/><g fill="#b4b4b4"><rect x="1" y="1" width="4.4" height="4.4"/><rect x="9.6" y="1" width="4.4" height="4.4"/><rect x="5.4" y="5.4" width="4.2" height="4.2"/><rect x="1" y="9.6" width="4.4" height="4.4"/><rect x="9.6" y="9.6" width="4.4" height="4.4"/></g></svg>
<svg style="left:1443px;top:731px" width="18" height="19" viewBox="0 0 18 19"><g transform="translate(0.6 0.8) scale(0.88)" fill="#b4b4b4"><path d="M18.5 0 C17.1 0.2 10.7 5.6 7.6 9.2 L10.4 12 C13.7 8.4 19.1 1.6 18.5 0 Z"/><path d="M6.9 10.5 C4.3 10.4 2.7 12.6 2 14.6 C1.5 16.4 0.9 17.8 0 18.7 C2.7 19.2 5.3 19.2 7.1 17.8 C8.9 16.4 9.9 14.8 9.6 13.2 Z"/></g></svg>
<svg style="left:1469px;top:732px" width="17" height="17" viewBox="0 0 17 17"><path d="M8.5 0.4 L11.6 4 H9.4 V7.6 H13 V5.4 L16.6 8.5 L13 11.6 V9.4 H9.4 V13 H11.6 L8.5 16.6 L5.4 13 H7.6 V9.4 H4 V11.6 L0.4 8.5 L4 5.4 V7.6 H7.6 V4 H5.4 Z" fill="#b4b4b4"/></svg>
<svg style="left:1496px;top:732px" width="19" height="17" viewBox="0 0 19 17"><path d="M0.8 3.6 H13.4 M3.6 0.6 V13 M0.8 12.4 H17.8 M15 6 V15.6 M3.6 14 V15.6" fill="none" stroke="#b4b4b4" stroke-width="1.5"/><path d="M12.6 3.2 L15.4 6.4 M15.6 1.4 L17.6 3.4" stroke="#b4b4b4" stroke-width="1.3"/></svg>
<svg style="left:1526px;top:731px" width="14" height="17" viewBox="0 0 14 17"><path d="M3.6 7.4 V5 C3.6 0.6 10.4 0.6 10.4 5 V7.4" fill="none" stroke="#b4b4b4" stroke-width="1.8"/><rect x="0.8" y="7" width="12.4" height="9.4" rx="1" fill="#b4b4b4"/><circle cx="7" cy="11.6" r="1.4" fill="#535353"/></svg>
<span class="t" style="left:1551px;top:733px;font-size:14.5px;color:#8c8c8c;letter-spacing:1.4px">填充:</span>
<div class="field" style="left:1592px;top:730px;width:67px;height:23px;background:#4f4f4f;border-color:#5a5a5a"></div><div class="abs" style="left:1595px;top:733px;width:40px;height:17px;background:#494949"></div><div class="abs" style="left:1640px;top:731px;width:1px;height:21px;background:#5a5a5a"></div><span class="t" style="left:1596px;top:735px;font-size:13px;color:#7c7c7c">100%</span><svg style="left:1645px;top:740px" width="9" height="5" viewBox="0 0 9 5"><path d="M0.5 0.5 L4.5 4.2 L8.5 0.5" fill="none" stroke="#6e6e6e" stroke-width="1.1"/></svg>
<div class="abs" style="left:1361px;top:762px;width:357px;height:128px;background:#4f4f4f"></div>
<div class="abs" style="left:1697px;top:762px;width:21px;height:128px;background:#4b4b4b"></div>
<div class="abs" style="left:1361px;top:762px;width:38px;height:42px;background:#535353;border-bottom:1px solid #484848"></div>
<div class="abs" style="left:1399px;top:762px;width:298px;height:42px;background:#6b6b6b"></div><div class="abs" style="left:1361px;top:804px;width:336px;height:1px;background:#484848"></div>
<svg style="left:1371px;top:777.5px" width="17" height="12" viewBox="0 0 17 12"><path d="M0.4 6 C3.4 0.4 13.6 0.4 16.6 6 C13.6 11.6 3.4 11.6 0.4 6 Z" fill="#e6e6e6"/><circle cx="8.5" cy="5.8" r="3.2" fill="#4a4a4a"/><circle cx="9.4" cy="4.9" r="0.8" fill="#c8c8c8"/></svg>
<div class="abs" style="left:1403px;top:767px;width:40px;height:32px;background:#fff;border:1px solid #2a2a2a"></div>
<span class="t" style="left:1457px;top:775px;font-size:14px;color:#f4f4f4">背景</span>
<svg style="left:1665px;top:775px" width="13" height="16" viewBox="0 0 13 16"><path d="M3.4 6.6 V4.4 C3.4 0.6 9.6 0.6 9.6 4.4 V6.6" fill="none" stroke="#e0e0e0" stroke-width="1.3"/><rect x="0.9" y="6.6" width="11.2" height="8.6" fill="none" stroke="#e0e0e0" stroke-width="1.4"/><rect x="5.4" y="9.8" width="2.2" height="2.2" fill="#e0e0e0"/></svg>
<div class="abs" style="left:1361px;top:890px;width:357px;height:16px;background:#535353;border-top:1px solid #444;overflow:hidden"><svg style="left:100px;top:8px" width="225" height="20" viewBox="0 0 225 20" fill="none"><g stroke="#8a8a8a" stroke-width="1.5"><rect x="3" y="3.4" width="10" height="7" rx="3.5"/><rect x="9" y="3.4" width="10" height="7" rx="3.5"/></g><path d="M40.6 14 V3.6 C40.6 1.6 42 0.6 44 1" stroke="#8a8a8a" stroke-width="1.3"/><path d="M38.6 5 H43.4 M45 5 L50 12 M50 5 L45 12" stroke="#8a8a8a" stroke-width="1.3"/><rect x="70.6" y="1" width="16" height="12" fill="#dcdcdc"/><circle cx="78.6" cy="8" r="4.4" fill="#535353"/><circle cx="112.6" cy="8" r="6.6" stroke="#dcdcdc" stroke-width="1.4"/><path d="M117.2 3.4 A6.6 6.6 0 0 0 108 12.6 Z" fill="#dcdcdc"/><path d="M138.6 1.6 H144.6 L146.4 3.6 H154.6 V14 H138.6 Z" fill="#dcdcdc"/><rect x="172.8" y="1" width="14" height="14" stroke="#dcdcdc" stroke-width="1.5"/><path d="M179.8 4 V12 M175.8 8 H183.8" stroke="#dcdcdc" stroke-width="1.5"/><path d="M206 3.4 H221 M210.6 3.4 V1 H216.4 V3.4 M208 3.4 V15 H219 V3.4 M211.4 6 V12 M213.5 6 V12 M215.6 6 V12" stroke="#8a8a8a" stroke-width="1.3"/></svg></div>
<div class="abs" style="left:1717px;top:80px;width:1px;height:826px;background:#444"></div>
</div>
</body>
</html>
